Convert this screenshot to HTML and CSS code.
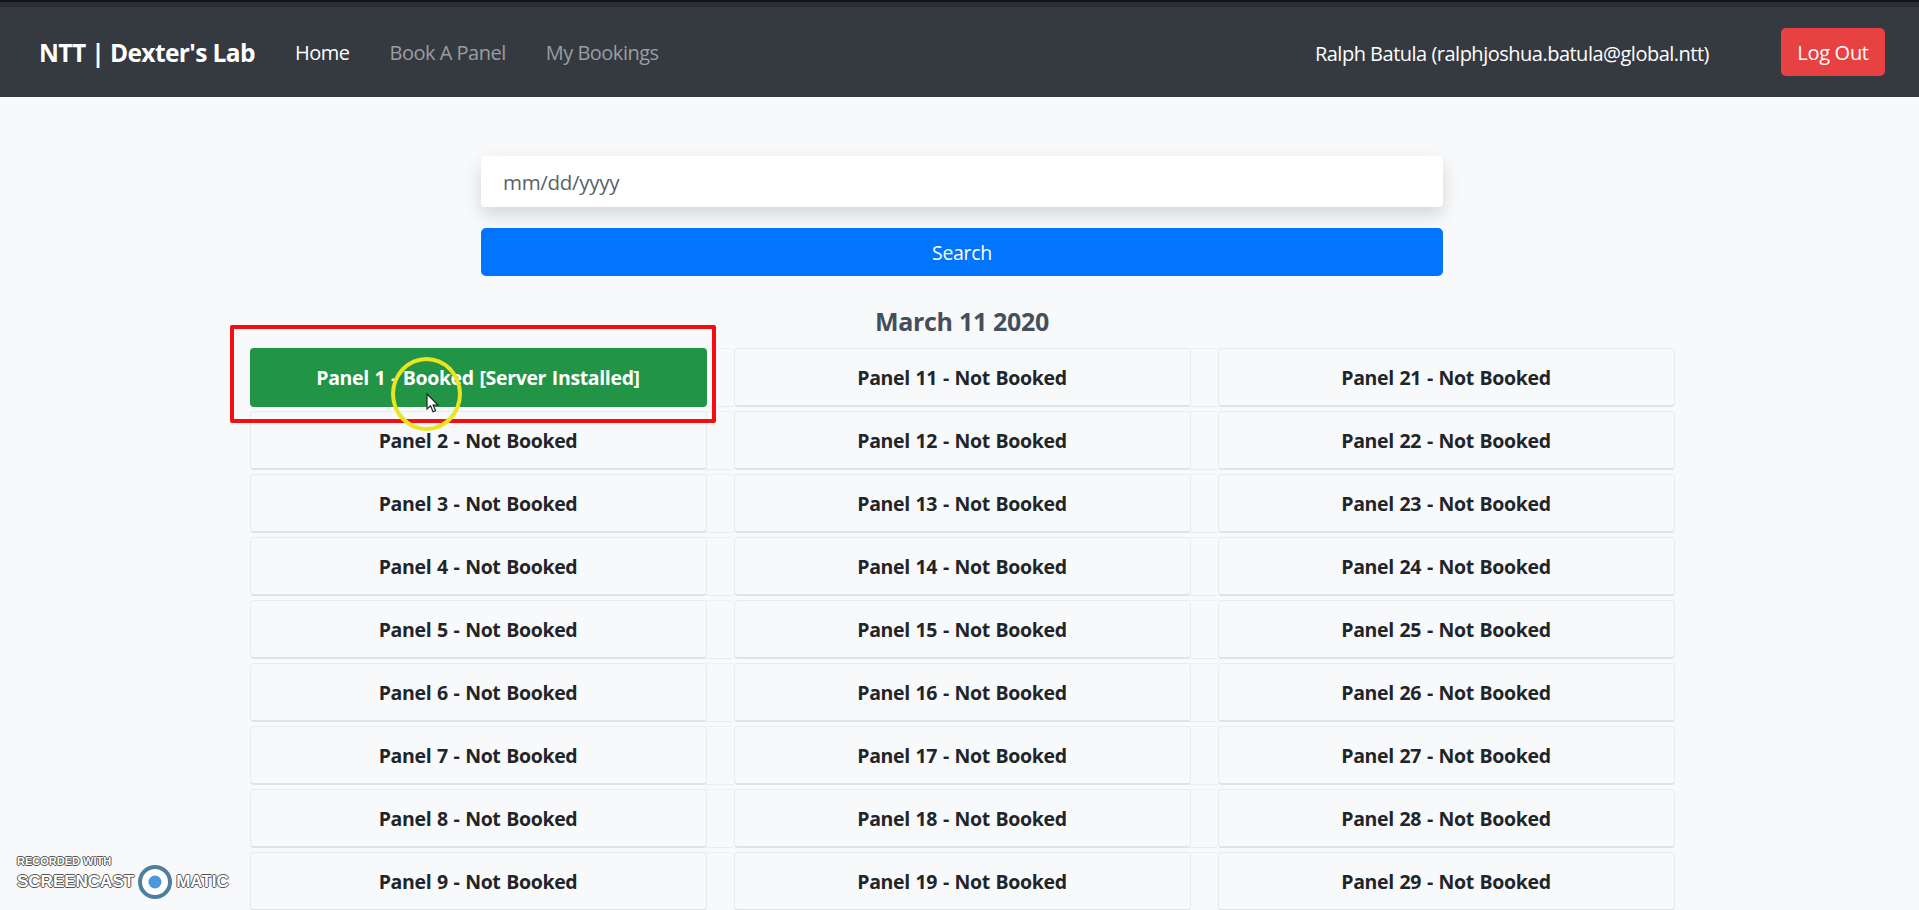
FILE: index.html
```html
<!DOCTYPE html>
<html lang="en">
<head>
    <meta charset="UTF-8">
    <meta name="viewport" content="width=device-width, initial-scale=1.0">
    <title>NTT | Dexter's Lab</title>
    <link rel="stylesheet" href="styles.css">
</head>
<body>
    <nav class="navbar">
        <a class="brand" href="#">NTT | Dexter's Lab</a>
        <ul class="nav-links">
            <li><a class="active" href="#">Home</a></li>
            <li><a href="#">Book A Panel</a></li>
            <li><a href="#">My Bookings</a></li>
        </ul>
        <span class="user">Ralph Batula (ralphjoshua.batula@global.ntt)</span>
        <button class="logout" type="button">Log Out</button>
    </nav>

    <main class="content">
        <form class="search-form">
            <div class="date-input">mm/dd/yyyy</div>
            <button class="search-btn" type="button">Search</button>
        </form>

        <h2 class="date-title">March 11 2020</h2>

        <div class="panels">
            <div class="panel booked">Panel 1 - Booked [Server Installed]</div>
            <div class="panel">Panel 2 - Not Booked</div>
            <div class="panel">Panel 3 - Not Booked</div>
            <div class="panel">Panel 4 - Not Booked</div>
            <div class="panel">Panel 5 - Not Booked</div>
            <div class="panel">Panel 6 - Not Booked</div>
            <div class="panel">Panel 7 - Not Booked</div>
            <div class="panel">Panel 8 - Not Booked</div>
            <div class="panel">Panel 9 - Not Booked</div>
            <div class="panel">Panel 11 - Not Booked</div>
            <div class="panel">Panel 12 - Not Booked</div>
            <div class="panel">Panel 13 - Not Booked</div>
            <div class="panel">Panel 14 - Not Booked</div>
            <div class="panel">Panel 15 - Not Booked</div>
            <div class="panel">Panel 16 - Not Booked</div>
            <div class="panel">Panel 17 - Not Booked</div>
            <div class="panel">Panel 18 - Not Booked</div>
            <div class="panel">Panel 19 - Not Booked</div>
            <div class="panel">Panel 21 - Not Booked</div>
            <div class="panel">Panel 22 - Not Booked</div>
            <div class="panel">Panel 23 - Not Booked</div>
            <div class="panel">Panel 24 - Not Booked</div>
            <div class="panel">Panel 25 - Not Booked</div>
            <div class="panel">Panel 26 - Not Booked</div>
            <div class="panel">Panel 27 - Not Booked</div>
            <div class="panel">Panel 28 - Not Booked</div>
            <div class="panel">Panel 29 - Not Booked</div>
        </div>
    </main>

    <!-- annotations from the screen recording -->
    <div class="highlight-box"></div>
    <div class="cursor-ring"></div>
    <svg class="cursor" width="14" height="21" viewBox="0 0 14 21">
        <path d="M1 1 L1 16 L4.6 12.8 L7 18.8 L9.6 17.7 L7.1 12 L12 12 Z" fill="#fff" stroke="#222" stroke-width="1.2"/>
    </svg>
    <div class="watermark">
        <div class="wm-small">RECORDED WITH</div>
        <div class="wm-row">
            <span>SCREENCAST</span>
            <svg width="36" height="36" viewBox="0 0 36 36">
                <circle cx="18" cy="18" r="15" fill="#fff" stroke="#4f7f9f" stroke-width="4"/>
                <circle cx="18" cy="18" r="6.5" fill="#4a97dc"/>
            </svg>
            <span>MATIC</span>
        </div>
    </div>
</body>
</html>
```

FILE: styles.css
```css
html, body {
    height: 100%;
    overflow: hidden;
}
body {
    margin: 0;
    font-family: "Open Sans", "Noto Sans", sans-serif;
    background-color: #f8f9fa;
    color: #212529;
}
.navbar {
    display: flex;
    align-items: center;
    height: 90px;
    padding: 5px 34px 0 39px;
    background-color: #343a40;
    border-top: 2px solid #111315;
    box-shadow: inset 0 5px 0 #2b2f34;
}
.brand {
    font-size: 24.5px;
    font-weight: 700;
    letter-spacing: -0.6px;
    color: #fff;
    text-decoration: none;
    margin-right: 40px;
}
.nav-links {
    display: flex;
    gap: 40px;
    list-style: none;
    margin: 0;
    padding: 0;
    flex: 1;
}
.nav-links a {
    font-size: 20px;
    letter-spacing: -0.5px;
    color: #9b9da0;
    text-decoration: none;
}
.nav-links a.active {
    color: #fff;
}
.user {
    font-size: 20px;
    letter-spacing: -0.5px;
    color: #fff;
    margin-right: 72px;
    padding-top: 2px;
}
.logout {
    width: 104px;
    height: 48px;
    font-family: inherit;
    font-size: 20px;
    letter-spacing: -0.3px;
    color: #fff;
    background-color: #e84142;
    border: none;
    border-radius: 5px;
}
.content {
    padding-left: 5px;
}
.search-form {
    display: flex;
    flex-direction: column;
    gap: 21px;
    width: 962px;
    margin: 59px auto 0;
}
.date-input {
    height: 51px;
    line-height: 53px;
    padding-left: 22px;
    font-size: 20.5px;
    letter-spacing: -0.3px;
    color: #5a6168;
    background: #fff;
    border-radius: 4px;
    box-shadow: 0 8px 18px rgba(0, 0, 0, 0.14);
}
.search-btn {
    height: 48px;
    font-family: inherit;
    font-size: 19.5px;
    letter-spacing: -0.3px;
    color: #fff;
    background-color: #0275fe;
    border: none;
    border-radius: 5px;
}
.date-title {
    margin: 27px 0 0;
    height: 45px;
    line-height: 36px;
    text-align: center;
    font-size: 25px;
    font-weight: 700;
    letter-spacing: -0.3px;
    color: #454f5b;
}
.panels {
    display: grid;
    grid-auto-flow: column;
    grid-template-rows: repeat(9, 59px);
    grid-template-columns: repeat(3, 457px);
    column-gap: 27px;
    row-gap: 4px;
    justify-content: center;
}
.panel {
    position: relative;
    display: flex;
    align-items: center;
    justify-content: center;
    font-size: 19.5px;
    font-weight: 700;
    letter-spacing: -0.35px;
    word-spacing: 1px;
    color: #212529;
    background-color: #f8f9fa;
    border: 1px solid #e9ebed;
    border-bottom: 2px solid #e0e2e5;
    border-radius: 4px;
    box-sizing: border-box;
}
/* faint row lines carry on across the gutter */
.panel::after {
    content: "";
    position: absolute;
    top: -1px;
    bottom: -2px;
    left: 100%;
    width: 27px;
    box-sizing: border-box;
    border-top: 1px solid #eff0f2;
    border-bottom: 1px solid #e9ebed;
}
.panel:nth-child(n+19)::after {
    display: none;
}
.panel.booked {
    color: #fff;
    background-color: #229445;
    border-color: #229445;
}
.highlight-box {
    position: absolute;
    left: 230px;
    top: 325px;
    width: 486px;
    height: 98px;
    box-sizing: border-box;
    border: 4px solid #f50d12;
    border-radius: 2px;
}
.cursor-ring {
    position: absolute;
    left: 391px;
    top: 357px;
    width: 71px;
    height: 74px;
    box-sizing: border-box;
    border: 4px solid #ebe421;
    border-radius: 50%;
}
.cursor {
    position: absolute;
    left: 426px;
    top: 393px;
}
.watermark {
    position: absolute;
    left: 17px;
    top: 855px;
    color: #fff;
    font-family: "Liberation Sans", sans-serif;
    font-weight: 700;
    text-shadow: 1px 0 #555, -1px 0 #555, 0 1px #555, 0 -1px #555;
}
.wm-small {
    font-size: 11px;
}
.wm-row {
    display: flex;
    align-items: center;
    gap: 3px;
    font-size: 17px;
    margin-top: -3px;
}
```
